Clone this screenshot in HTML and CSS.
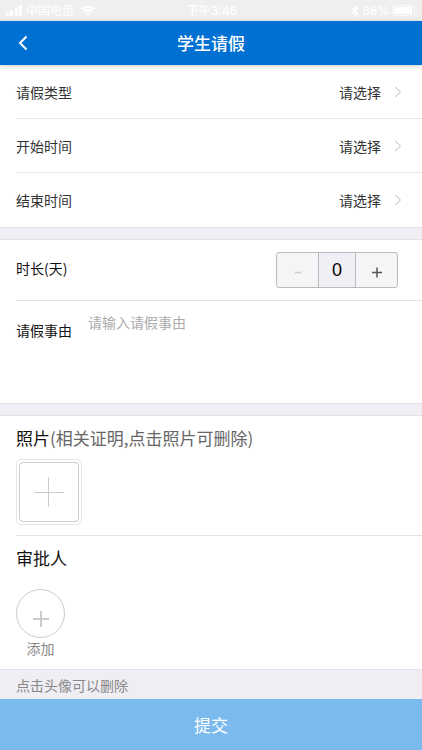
FILE: index.html
```html
<!DOCTYPE html>
<html lang="zh-CN">
<head>
<meta charset="utf-8">
<meta name="viewport" content="width=device-width, initial-scale=1">
<title>学生请假</title>
<link rel="stylesheet" href="styles.css">
</head>
<body>
<div class="status">
  <div class="status-side">
    <svg width="17" height="11" viewBox="0 0 17 11" fill="currentColor" aria-hidden="true"><rect x="0" y="7" width="3" height="4" rx="1"/><rect x="4" y="5" width="3" height="6" rx="1"/><rect x="9" y="3" width="3" height="8" rx="1"/><rect x="13" y="0" width="3" height="11" rx="1"/></svg>
    <span class="carrier">中国电信</span>
    <svg width="14" height="11" viewBox="0 0 14 11" fill="none" stroke="currentColor" stroke-width="2" aria-hidden="true"><path d="M.7 4.2a9 9 0 0 1 12.6 0M3 6.8a5.600 5.600 0 0 1 8 0"/><path d="M7 10.600 4.900 8.500a3 3 0 0 1 4.200 0z" fill="currentColor" stroke="none"/></svg>
  </div>
  <span class="clock">下午3:46</span>
  <div class="status-side status-end">
    <svg width="8" height="12" viewBox="0 0 8 12" fill="none" stroke="currentColor" stroke-width="1.200" aria-hidden="true"><path d="M1 3.300 7 8.700 4 11.200V.8l3 2.500L1 8.700"/></svg>
    <span>88%</span>
    <svg width="26" height="11" viewBox="0 0 26 11" aria-hidden="true"><rect x=".5" y=".5" width="22" height="10" rx="2" fill="none" stroke="currentColor" opacity=".6"/><rect x="2" y="2" width="18" height="7" rx="1" fill="currentColor"/><path d="M24 3.500q1.500 2 0 4z" fill="currentColor" opacity=".6"/></svg>
  </div>
</div>
<header class="header">
  <button class="back" type="button" aria-label="返回"><svg width="10" height="16" viewBox="0 0 10 16" fill="none" stroke="currentColor" stroke-width="2" aria-hidden="true"><path d="M8.500 1.500 2 8l6.500 6.500"/></svg></button>
  <h1 class="title">学生请假</h1>
</header>
<form class="form">
  <section class="group">
    <button class="row" type="button"><span>请假类型</span><span class="value">请选择</span><svg class="chevron" viewBox="0 0 8 12" aria-hidden="true"><path d="M1 .8 6.500 6 1 11.200"/></svg></button>
    <button class="row" type="button"><span>开始时间</span><span class="value">请选择</span><svg class="chevron" viewBox="0 0 8 12" aria-hidden="true"><path d="M1 .8 6.500 6 1 11.200"/></svg></button>
    <button class="row" type="button"><span>结束时间</span><span class="value">请选择</span><svg class="chevron" viewBox="0 0 8 12" aria-hidden="true"><path d="M1 .8 6.500 6 1 11.200"/></svg></button>
  </section>
  <div class="band"></div>
  <section class="group">
    <div class="duration">
      <label class="duration-label" for="days">时长(天)</label>
      <div class="stepper">
        <button class="step" type="button" aria-label="减少" disabled><svg width="12" height="12" viewBox="0 0 12 12" fill="none" stroke="currentColor" stroke-width="1.500" aria-hidden="true"><path d="M3 6.500h6"/></svg></button>
        <input class="days" id="days" type="text" inputmode="numeric" value="0">
        <button class="step" type="button" aria-label="增加"><svg width="12" height="12" viewBox="0 0 12 12" fill="none" stroke="currentColor" stroke-width="1.500" aria-hidden="true"><path d="M6 1.500v10M1 6.500h10"/></svg></button>
      </div>
    </div>
    <div class="reason">
      <label class="reason-label" for="reason">请假事由</label>
      <textarea class="reason-text" id="reason" placeholder="请输入请假事由"></textarea>
    </div>
  </section>
  <div class="band"></div>
  <section class="group">
    <div class="photos">
      <h2 class="heading">照片<span class="note">(相关证明,点击照片可删除)</span></h2>
      <button class="add-photo" type="button" aria-label="添加照片"><span class="add-photo-inner"><svg width="30" height="30" viewBox="0 0 30 30" fill="none" stroke="currentColor" aria-hidden="true"><path d="M14.500 0v30M0 15.500h30"/></svg></span></button>
    </div>
    <div class="approvers">
      <h2 class="heading">审批人</h2>
      <button class="add-person" type="button"><span class="circle"><svg width="16" height="16" viewBox="0 0 16 16" fill="none" stroke="currentColor" stroke-width="2" aria-hidden="true"><path d="M8 0v16M0 8h16"/></svg></span>添加</button>
    </div>
  </section>
  <p class="hint">点击头像可以删除</p>
  <button class="submit" type="submit">提交</button>
</form>
</body>
</html>
```
FILE: styles.css
```css
* { box-sizing: border-box; }

body {
  margin: 0;
  background: #fff;
  color: #111;
  font-family: "Noto Sans CJK SC", sans-serif;
  font-size: 14px;
  line-height: 20px;
}

button, input, textarea {
  margin: 0;
  padding: 0;
  border: 0;
  background: none;
  color: inherit;
  font: inherit;
}

.status {
  display: flex;
  align-items: center;
  height: 21px;
  padding: 0 4px 0 6px;
  background: #efefef;
  color: #fff;
  font-family: Inter, "Noto Sans CJK SC", sans-serif;
  font-size: 12px;
}

.status-side {
  display: flex;
  flex: 1;
  align-items: center;
  gap: 3px;
}

.status-end { justify-content: flex-end; }
.carrier { margin-right: 4px; }
.clock { font-weight: 500; }

.header {
  display: grid;
  grid-template-columns: 48px 1fr 48px;
  align-items: center;
  height: 44px;
  background: #0070d2;
  color: #fff;
  box-shadow: 0 1px 5px rgba(0, 0, 0, .2);
}

.back {
  display: flex;
  align-items: center;
  height: 44px;
  padding-left: 18px;
}

.title {
  margin: 0;
  font-size: 17px;
  font-weight: 500;
  line-height: 24px;
  text-align: center;
}

.group { padding-left: 16px; }

.row {
  display: flex;
  align-items: center;
  width: 100%;
  height: 54px;
  padding-right: 20px;
  border-bottom: 1px solid #e6e6e8;
  color: #333;
  text-align: left;
}

.row:last-child { border-bottom: 0; }
.value { margin-left: auto; }

.chevron {
  width: 8px;
  height: 12px;
  margin-left: 13px;
  fill: none;
  stroke: #b8b8bc;
}

.band {
  height: 13px;
  border: solid #e2e1e8;
  border-width: 1px 0;
  background: #efeef5;
}

.duration {
  display: flex;
  align-items: flex-start;
  justify-content: space-between;
  height: 61px;
  padding: 12px 24px 0 0;
  border-bottom: 1px solid #e2e2e4;
}

.duration-label { padding-top: 6px; }

.stepper {
  display: flex;
  height: 36px;
  border: 1px solid #bbb;
  border-radius: 3px;
  background: #f5f5f7;
}

.step {
  display: flex;
  align-items: center;
  justify-content: center;
  width: 41px;
  padding-top: 4px;
  color: #555;
}

.step:disabled { color: #ccc; }

.days {
  width: 38px;
  border: solid #bbb;
  border-width: 0 1px;
  background: #efeff5;
  color: #000;
  font-family: "Liberation Sans", sans-serif;
  font-size: 18px;
  text-align: center;
}

.reason {
  display: flex;
  gap: 16px;
  height: 102px;
}

.reason-label { padding-top: 19px; }

.reason-text {
  flex: 1;
  padding: 11px 16px 0 0;
  resize: none;
  outline: 0;
}

.reason-text::placeholder { color: #aaa; }

.heading {
  margin: 0;
  font-size: 17px;
  font-weight: 400;
  line-height: 24px;
}

.note { color: #666; }

.photos {
  padding: 10px 0;
  border-bottom: 1px solid #e2e2e4;
}

.add-photo {
  display: block;
  width: 66px;
  height: 66px;
  margin-top: 9px;
  padding: 2px;
  border: 1px solid #e4e4e4;
  border-radius: 5px;
}

.add-photo-inner {
  display: flex;
  align-items: center;
  justify-content: center;
  height: 100%;
  border: 1px solid #ccc;
  border-radius: 4px;
  color: #ccc;
}

.approvers { padding: 10px 0 11px; }

.add-person {
  display: block;
  margin-top: 19px;
  color: #888;
}

.circle {
  display: flex;
  align-items: center;
  justify-content: center;
  width: 49px;
  height: 49px;
  padding-top: 10px;
  border: 1px solid #ccc;
  border-radius: 50%;
  color: #ccc;
}

.hint {
  margin: 0;
  padding: 5px 16px 4px;
  border-top: 1px solid #e2e1e8;
  background: #efeef4;
  color: #888;
}

.submit {
  display: block;
  width: 100%;
  height: 51px;
  background: #7abaed;
  color: #fff;
  font-size: 17px;
}
```
